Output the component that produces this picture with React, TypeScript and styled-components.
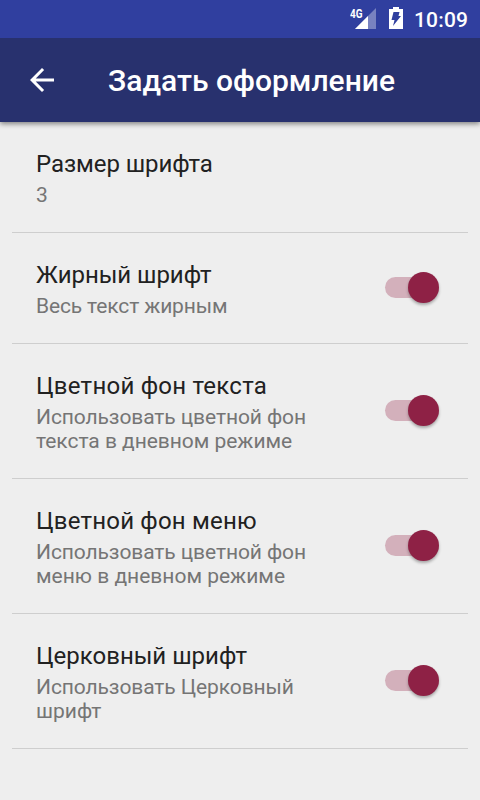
import React from "react";
import styled, { createGlobalStyle } from "styled-components";

const GlobalStyle = createGlobalStyle`
  * { box-sizing: border-box; }
  body { margin: 0; background: #eeeeee; font-family: Roboto, sans-serif; }
`;
const Screen = styled.main`
  width: 480px; height: 800px; display: flex; flex-direction: column;
  overflow: hidden; background: #eeeeee;
`;
const StatusBar = styled.div`
  height: 38px; flex: none; display: flex; justify-content: flex-end; align-items: flex-start;
  padding-right: 12px; background: #303f9f; color: #fff;
`;
const StatusIcons = styled.svg`
  width: 60px; height: 38px; margin-right: 4px;
`;
const NetworkType = styled.text`
  font-family: Roboto, sans-serif; font-size: 12.5px; font-weight: 700; fill: #fff;
`;
const Clock = styled.span`
  font-size: 21px; line-height: 25px; font-weight: 500; padding-top: 8px; letter-spacing: 0.2px; margin-right: -0.2px;
`;
const Toolbar = styled.header`
  height: 84px; flex: none; display: flex; align-items: center; padding-left: 24px;
  background: #28316e; color: #fff; clip-path: inset(0 0 -12px 0);
  box-shadow: 0 2px 5px rgba(0,0,0,.45);
`;
const BackIcon = styled.svg`
  width: 36px; height: 36px; flex: none;
`;
const Title = styled.h1`
  margin: 2px 0 0 48px; font-size: 30px; font-weight: 500; line-height: 36px; white-space: nowrap;
  letter-spacing: 0.03px;
`;
const List = styled.ul`
  list-style: none; margin: 0; padding: 0 12px;
`;
const Row = styled.li<{ $height: number }>`
  height: ${p => p.$height}px; display: flex; align-items: flex-start; justify-content: space-between;
  padding: 28px 24px 0; border-bottom: 1px solid #cecece;
`;
const Label = styled.div<{ $tracking: number }>`
  font-size: 24px; line-height: 28px; color: #212121; white-space: nowrap;
  letter-spacing: ${p => p.$tracking}px;
`;
const Summary = styled.div`
  margin-top: 5px; font-size: 21px; line-height: 24px; color: #757575;
`;
const SummaryLine = styled.div<{ $tracking: number }>`
  white-space: nowrap; letter-spacing: ${p => p.$tracking}px;
`;
const Switch = styled.span`
  width: 54px; height: 31px; flex: none; display: flex; align-items: center;
  align-self: center; margin: -30px 5px 0 0;
`;
const Track = styled.span`
  width: 42px; height: 21px; border-radius: 11px; background: #d3b0bb;
`;
const Thumb = styled.span`
  width: 31px; height: 31px; flex: none; margin-left: -19px; border-radius: 50%; background: #8e2145;
  box-shadow: 0 2px 3px rgba(0,0,0,.3);
`;

const settings = [
  { label: "Размер шрифта", tracking: -0.08, lines: [["3", 0]], height: 111, toggle: false },
  { label: "Жирный шрифт", tracking: -0.05, lines: [["Весь текст жирным", -0.14]], height: 111, toggle: true },
  { label: "Цветной фон текста", tracking: 0.24, lines: [["Использовать цветной фон", -0.1], ["текста в дневном режиме", -0.04]], height: 135, toggle: true },
  { label: "Цветной фон меню", tracking: 0.2, lines: [["Использовать цветной фон", -0.1], ["меню в дневном режиме", 0]], height: 135, toggle: true },
  { label: "Церковный шрифт", tracking: 0, lines: [["Использовать Церковный", -0.1], ["шрифт", 0]], height: 135, toggle: true },
] as { label: string; tracking: number; lines: [string, number][]; height: number; toggle: boolean }[];

export default function App() {
  return (
    <Screen>
      <GlobalStyle />
      <StatusBar>
        <StatusIcons viewBox="0 0 60 38">
          <NetworkType x="0" y="17.5" textLength="12.5" lengthAdjust="spacingAndGlyphs">4G</NetworkType>
          <path d="M26 8V29H5z" fill="#fff" fillOpacity=".35" />
          <path d="M18 16V29H5z" fill="#fff" />
          <path fill="#fff" d="M43 7h6v2h4v20H39V9h4z" />
          <path fill="#303f9f" d="M43.5 12H49.5L48.5 16H51L43 26L44.5 20H41.5z" />
        </StatusIcons>
        <Clock>10:09</Clock>
      </StatusBar>
      <Toolbar>
        <BackIcon viewBox="0 0 24 24"><path fill="#fff" d="M20 11H7.83l5.59-5.59L12 4l-8 8 8 8 1.41-1.41L7.83 13H20v-2z" /></BackIcon>
        <Title>Задать оформление</Title>
      </Toolbar>
      <List>
        {settings.map(s => (
          <Row key={s.label} $height={s.height}>
            <div>
              <Label $tracking={s.tracking}>{s.label}</Label>
              <Summary>
                {s.lines.map(([text, tracking]) => <SummaryLine key={text} $tracking={tracking}>{text}</SummaryLine>)}
              </Summary>
            </div>
            {s.toggle && <Switch><Track /><Thumb /></Switch>}
          </Row>
        ))}
      </List>
    </Screen>
  );
}
